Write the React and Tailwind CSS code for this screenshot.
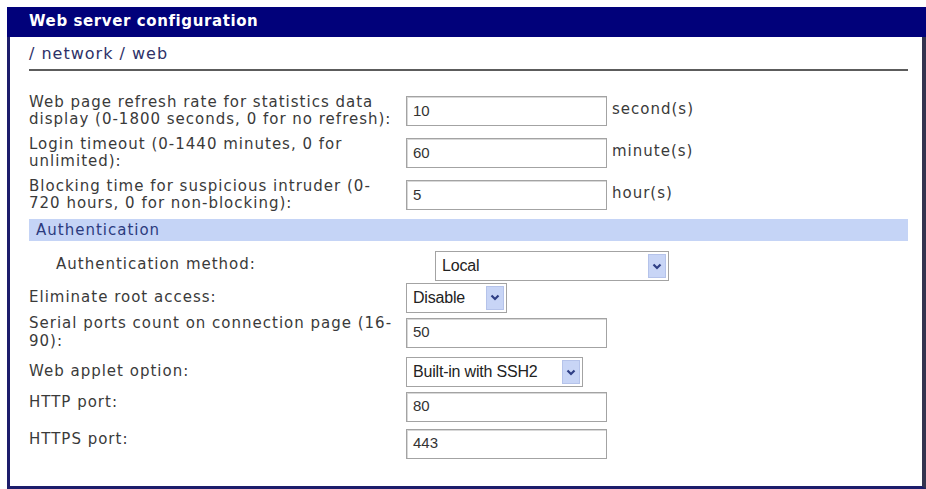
import React from 'react';

const labelFont = { fontFamily: '"DejaVu Sans", Verdana, sans-serif' };

function TextBox({ value, width = 'w-[201px]' }) {
  return (
    <div
      className={`${width} h-[30px] flex items-center pl-[6px] border border-[#a3a3a3] shadow-[inset_1px_1px_0_#d8d8d8] bg-white text-[15px] text-[#333] tracking-normal`}
      style={{ fontFamily: '"Liberation Sans", Arial, sans-serif' }}
    >
      {value}
    </div>
  );
}

function Select({ value, width }) {
  return (
    <div
      className={`${width} h-[30px] flex items-stretch border border-[#a3a3a3] bg-white p-[2px] tracking-normal`}
      style={{ fontFamily: '"Liberation Sans", Arial, sans-serif' }}
    >
      <div className="flex-1 flex items-center pl-[4px] text-[16px] text-[#222] tracking-[-0.2px]">{value}</div>
      <div className="w-[18px] flex items-center justify-center bg-[#c8d5f6] border border-[#b5c3ea]">
        <svg width="10" height="7" viewBox="0 0 10 7">
          <path d="M1.5 1.5 L5 5 L8.5 1.5" fill="none" stroke="#2f3f86" strokeWidth="2.2" />
        </svg>
      </div>
    </div>
  );
}

function Row({ h, label, children, unit }) {
  return (
    <div className={`${h} flex items-center`}>
      <div className="w-[377px] leading-[17.5px]">{label}</div>
      {children}
      {unit && <div className="ml-[5px] pb-[3px]">{unit}</div>}
    </div>
  );
}

export default function App() {
  return (
    <div className="w-[926px] h-[489px] bg-white pt-[7px] pl-[7px] overflow-hidden">
      <div className="h-[482px] border-l-[3px] border-b-[3px] border-r-[4px] border-l-[#1d1d6b] border-b-[#1d1d6b] border-r-[#34344f]">
        <div
          className="h-[30px] -ml-[3px] -mr-[4px] bg-[#01017a] text-white font-bold text-[15px] tracking-[0.6px] flex items-center pl-[22px] pb-[2px]"
          style={labelFont}
        >
          Web server configuration
        </div>
        <div className="pl-[19px] pr-[14px] text-[15px] text-[#3a3a3a] tracking-[1px]" style={labelFont}>
          <div className="h-[34px] flex items-center text-[16px] text-[#2e3168] border-b-2 border-[#5c5c5c] pt-[2px]">
            / network / web
          </div>
          <div className="pt-[19px]">
            <Row h="h-[42px]" label={<>Web page refresh rate for statistics data<br />display (0-1800 seconds, 0 for no refresh):</>} unit="second(s)">
              <TextBox value="10" />
            </Row>
            <Row h="h-[42px]" label={<>Login timeout (0-1440 minutes, 0 for<br />unlimited):</>} unit="minute(s)">
              <TextBox value="60" />
            </Row>
            <Row h="h-[42px]" label={<>Blocking time for suspicious intruder (0-<br />720 hours, 0 for non-blocking):</>} unit="hour(s)">
              <TextBox value="5" />
            </Row>
          </div>
          <div className="mt-[3px] h-[22px] bg-[#c5d4f6] text-[#2c3b7e] pl-[7px] flex items-center">
            Authentication
          </div>
          <div className="mt-[9px] h-[32px] flex items-center">
            <div className="w-[406px] pl-[27px] pb-[4px]">Authentication method:</div>
            <Select value="Local" width="w-[234px]" />
          </div>
          <Row h="h-[31px]" label="Eliminate root access:">
            <Select value="Disable" width="w-[101px]" />
          </Row>
          <Row h="h-[39px]" label={<>Serial ports count on connection page (16-<br />90):</>}>
            <TextBox value="50" />
          </Row>
          <Row h="h-[40px]" label="Web applet option:">
            <Select value="Built-in with SSH2" width="w-[177px]" />
          </Row>
          <Row h="h-[29px]" label={<span className="relative -top-[4px]">HTTP port:</span>}>
            <TextBox value="80" />
          </Row>
          <Row h="h-[45px]" label={<span className="relative -top-[4px]">HTTPS port:</span>}>
            <TextBox value="443" />
          </Row>
        </div>
      </div>
    </div>
  );
}
